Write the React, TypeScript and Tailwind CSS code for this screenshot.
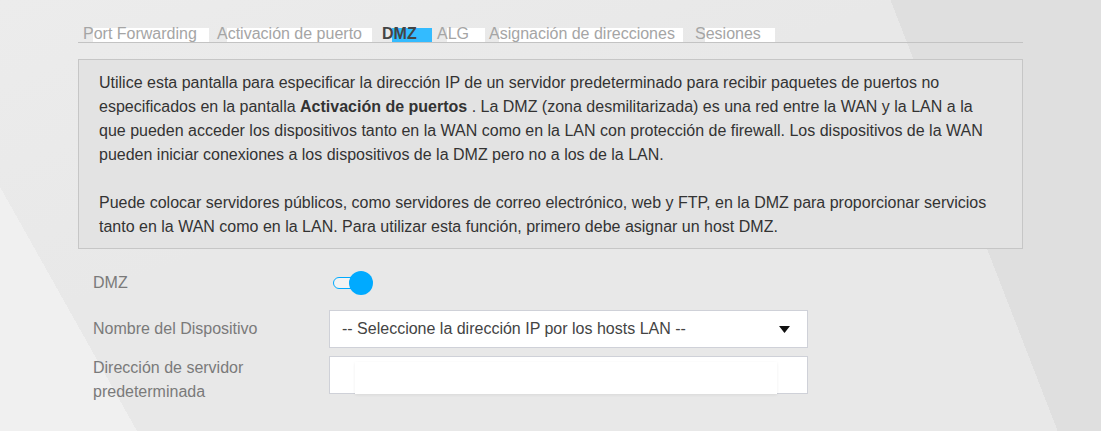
const tabs = [
  { label: "Port Forwarding", w: "w-[134px]", box: "w-[116px]" },
  { label: "Activación de puerto", w: "w-[165px]", box: "w-[145px]" },
  { label: "DMZ", w: "w-[55px]", box: "w-[40px]", active: true },
  { label: "ALG", w: "w-[52px]", box: "w-[38px]" },
  { label: "Asignación de direcciones", w: "w-[206px]", box: "w-[184px]" },
  { label: "Sesiones", w: "w-[90px]", box: "w-[70px]" },
];

function Toggle() {
  return (
    <div className="relative flex h-6 w-[42px] items-center">
      <div className="h-[12px] w-[26px] rounded-full border-[1.5px] border-[#00aaff] bg-[#f3f3f3]" />
      <div className="absolute left-[16px] top-0 h-6 w-6 rounded-full bg-[#00aaff]" />
    </div>
  );
}

export default function App() {
  return (
    <div
      className="h-[431px] w-full overflow-hidden bg-[#e8e8e8] bg-[linear-gradient(60.7deg,#f0f0f0_10.2%,transparent_10.2%),linear-gradient(68.8deg,transparent_83.4%,#dfdfdf_83.4%),linear-gradient(160deg,#ececec_0%,transparent_40%)] pl-[78px] text-[16px] font-['Liberation_Sans',Arial,sans-serif]"
    >
      <div className="w-[945px]">
        {/* Tabs */}
        <div className="flex h-[43px] items-start border-b border-[#c3c3c3] pl-[5px] pt-[25px] leading-[18px]">
          {tabs.map((t) => (
            <div key={t.label} className={`relative h-[17px] shrink-0 ${t.w}`}>
              <div
                className={`absolute bottom-0 left-[10px] top-[3px] ${t.box} ${
                  t.active ? "bg-[#33bbff]" : "bg-white"
                }`}
              />
              <span
                className={`relative whitespace-nowrap ${
                  t.active ? "font-bold text-[#444]" : "text-[#a5a5a5]"
                }`}
              >
                {t.label}
              </span>
            </div>
          ))}
        </div>

        {/* Description */}
        <div className="mt-4 border border-[#c6c6c6] bg-[#e3e3e3] pb-[9px] pl-5 pr-[28px] pt-[11px] leading-6 text-[#333]">
          <p>
            Utilice esta pantalla para especificar la dirección IP de un servidor predeterminado para recibir
            paquetes de puertos no especificados en la pantalla <b>Activación de puertos</b> . La DMZ (zona
            desmilitarizada) es una red entre la WAN y la LAN a la que pueden acceder los dispositivos tanto en la
            WAN como en la LAN con protección de firewall. Los dispositivos de la WAN pueden iniciar conexiones a los
            dispositivos de la DMZ pero no a los de la LAN.
          </p>
          <p className="mt-6">
            Puede colocar servidores públicos, como servidores de correo electrónico, web y FTP, en la DMZ para
            proporcionar servicios tanto en la WAN como en la LAN. Para utilizar esta función, primero debe asignar
            un host DMZ.
          </p>
        </div>

        {/* Form */}
        <div className="mt-[22px] pl-[15px] leading-6 text-[#7a7a7a]">
          <div className="flex h-6 items-center">
            <div className="w-[236px] shrink-0">DMZ</div>
            <div className="pl-1">
              <Toggle />
            </div>
          </div>

          <div className="mt-[15px] flex h-[38px] items-center">
            <div className="w-[236px] shrink-0">Nombre del Dispositivo</div>
            <div className="flex h-[38px] w-[479px] items-center justify-between border border-[#cfd1d8] bg-white pl-3 pr-[17px] text-[#444]">
              <span>-- Seleccione la dirección IP por los hosts LAN --</span>
              <svg width="11" height="7" viewBox="0 0 11 7">
                <polygon points="0,0 11,0 5.5,7" fill="#111" />
              </svg>
            </div>
          </div>

          <div className="mt-[8px] flex items-start">
            <div className="w-[236px] shrink-0">
              Dirección de servidor
              <br />
              predeterminada
            </div>
            <div className="relative h-[38px] w-[479px] border border-[#cfd1d8] bg-white">
              <div className="absolute left-[25px] top-[5px] h-[32px] w-[422px] bg-white shadow-[0_1px_3px_rgba(0,0,0,0.07)]" />
            </div>
          </div>
        </div>
      </div>
    </div>
  );
}
